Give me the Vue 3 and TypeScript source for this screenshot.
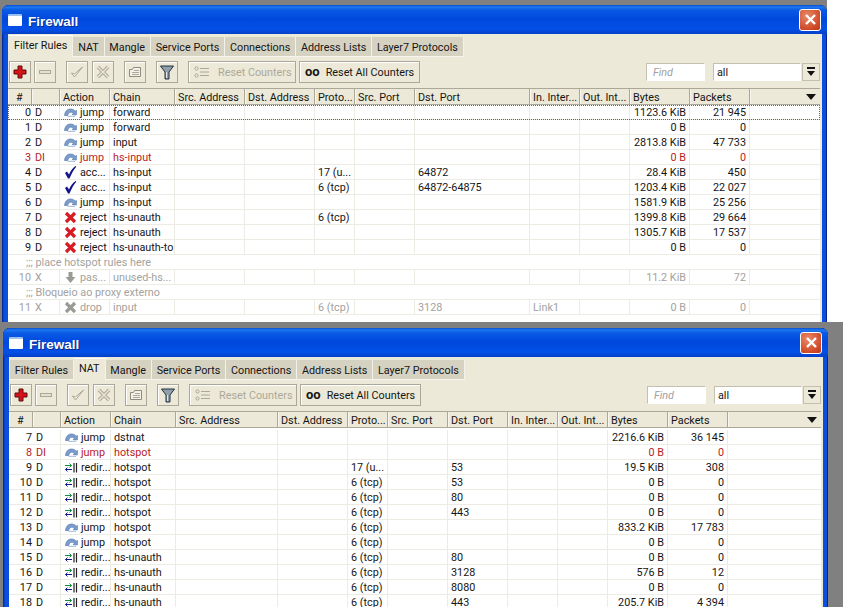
<script setup lang="ts">
type Row = {
  num?: string; flag?: string; icon?: string; action?: string; chain?: string;
  proto?: string; dport?: string; iface?: string; bytes?: string; packets?: string;
  comment?: string; state?: string;
}
const row = (num: string, flag: string, icon: string, action: string, chain: string, proto: string, dport: string, bytes: string, packets: string, state = '', iface = ''): Row =>
  ({ num, flag, icon, action, chain, proto, dport, bytes, packets, state, iface })

const tabs = ['Filter Rules', 'NAT', 'Mangle', 'Service Ports', 'Connections', 'Address Lists', 'Layer7 Protocols']
const headers = ['#', '', 'Action', 'Chain', 'Src. Address', 'Dst. Address', 'Proto...', 'Src. Port', 'Dst. Port', 'In. Inter...', 'Out. Int...', 'Bytes', 'Packets', '']

const windows = [
  {
    key: 'filter', active: 'Filter Rules',
    cols: '24px 28px 50px 65px 70px 70px 40px 60px 115px 50px 50px 60px 60px 70px',
    rows: [
      row('0', 'D', 'jump', 'jump', 'forward', '', '', '1123.6 KiB', '21 945', 'focus'),
      row('1', 'D', 'jump', 'jump', 'forward', '', '', '0 B', '0'),
      row('2', 'D', 'jump', 'jump', 'input', '', '', '2813.8 KiB', '47 733'),
      row('3', 'DI', 'jump', 'jump', 'hs-input', '', '', '0 B', '0', 'red'),
      row('4', 'D', 'accept', 'acc...', 'hs-input', '17 (u...', '64872', '28.4 KiB', '450'),
      row('5', 'D', 'accept', 'acc...', 'hs-input', '6 (tcp)', '64872-64875', '1203.4 KiB', '22 027'),
      row('6', 'D', 'jump', 'jump', 'hs-input', '', '', '1581.9 KiB', '25 256'),
      row('7', 'D', 'reject', 'reject', 'hs-unauth', '6 (tcp)', '', '1399.8 KiB', '29 664'),
      row('8', 'D', 'reject', 'reject', 'hs-unauth', '', '', '1305.7 KiB', '17 537'),
      row('9', 'D', 'reject', 'reject', 'hs-unauth-to', '', '', '0 B', '0'),
      { comment: ';;; place hotspot rules here' },
      row('10', 'X', 'pass', 'pas...', 'unused-hs...', '', '', '11.2 KiB', '72', 'off'),
      { comment: ';;; Bloqueio ao proxy externo' },
      row('11', 'X', 'drop', 'drop', 'input', '6 (tcp)', '3128', '0 B', '0', 'off', 'Link1'),
    ] as Row[],
  },
  {
    key: 'nat', active: 'NAT',
    cols: '24px 28px 50px 65px 102px 70px 40px 60px 60px 50px 50px 60px 60px 93px',
    rows: [
      row('7', 'D', 'jump', 'jump', 'dstnat', '', '', '2216.6 KiB', '36 145'),
      row('8', 'DI', 'jump', 'jump', 'hotspot', '', '', '0 B', '0', 'red'),
      row('9', 'D', 'redir', 'redir...', 'hotspot', '17 (u...', '53', '19.5 KiB', '308'),
      row('10', 'D', 'redir', 'redir...', 'hotspot', '6 (tcp)', '53', '0 B', '0'),
      row('11', 'D', 'redir', 'redir...', 'hotspot', '6 (tcp)', '80', '0 B', '0'),
      row('12', 'D', 'redir', 'redir...', 'hotspot', '6 (tcp)', '443', '0 B', '0'),
      row('13', 'D', 'jump', 'jump', 'hotspot', '6 (tcp)', '', '833.2 KiB', '17 783'),
      row('14', 'D', 'jump', 'jump', 'hotspot', '6 (tcp)', '', '0 B', '0'),
      row('15', 'D', 'redir', 'redir...', 'hs-unauth', '6 (tcp)', '80', '0 B', '0'),
      row('16', 'D', 'redir', 'redir...', 'hs-unauth', '6 (tcp)', '3128', '576 B', '12'),
      row('17', 'D', 'redir', 'redir...', 'hs-unauth', '6 (tcp)', '8080', '0 B', '0'),
      row('18', 'D', 'redir', 'redir...', 'hs-unauth', '6 (tcp)', '443', '205.7 KiB', '4 394'),
    ] as Row[],
  },
]
</script>

<template>
  <div class="stage">
    <section v-for="win in windows" :key="win.key" class="band" :class="'band-' + win.key">
      <div class="window">
        <header class="titlebar">
          <span class="win-icon"></span>
          <span class="win-title">Firewall</span>
          <span class="close">
            <svg width="13" height="13" viewBox="0 0 13 13"><path d="M2 2l9 9M11 2l-9 9" stroke="#fff" stroke-width="2.4" fill="none"/></svg>
          </span>
        </header>
        <div class="client">
          <nav class="tabs">
            <span v-for="t in tabs" :key="t" class="tab" :class="{ active: t === win.active }">{{ t }}</span>
          </nav>
          <div class="toolbar">
            <div class="group g3">
              <button class="btn sq">
                <svg width="16" height="16" viewBox="0 0 16 16"><path d="M6 2h4v4h4v4h-4v4H6v-4H2V6h4z" fill="#d81018" stroke="#5a1010" stroke-width="1"/></svg>
              </button>
              <button class="btn sq">
                <svg width="14" height="14" viewBox="0 0 14 14"><rect x="1.5" y="5.5" width="11" height="3" fill="#e4e1d2" stroke="#aca899"/></svg>
              </button>
            </div>
            <div class="group g4">
              <button class="btn sq">
                <svg width="14" height="14" viewBox="0 0 14 14"><path d="M1.5 8l3 4 8-10-8 7z" fill="#f4f2e8" stroke="#aca899"/></svg>
              </button>
              <button class="btn sq">
                <svg width="14" height="14" viewBox="0 0 14 14"><path d="M2 2l10 10M12 2L2 12" stroke="#aca899" stroke-width="3.4"/><path d="M2 2l10 10M12 2L2 12" stroke="#ece9d8" stroke-width="1.4"/></svg>
              </button>
            </div>
            <button class="btn sq">
              <svg width="14" height="14" viewBox="0 0 14 14"><path d="M1.5 4.500h3l1-2h7v9h-11z" fill="#f4f2e8" stroke="#8f8c7e"/><path d="M6 5.500h5M4 7.500h7M4 9.500h7" stroke="#aca899"/></svg>
            </button>
            <button class="btn sq">
              <svg width="16" height="16" viewBox="0 0 16 16"><path d="M1.500 2h13L10 8v7H6V8z" fill="#8fa0ac" stroke="#22303a"/><path d="M7.500 8v6" stroke="#dfe5e8"/></svg>
            </button>
            <div class="group g3">
              <button class="btn wide dim">
                <svg width="16" height="12" viewBox="0 0 16 12"><circle cx="2.500" cy="2.500" r="1.600" fill="none" stroke="#aca899"/><circle cx="2.500" cy="9.500" r="1.600" fill="none" stroke="#aca899"/><path d="M6 2.500h9M6 6h9M6 9.500h9" stroke="#aca899"/></svg>
                <span class="nowrap">Reset Counters</span>
              </button>
              <button class="btn wider">
                <b class="zeros">oo</b>
                <span class="nowrap">Reset All Counters</span>
              </button>
            </div>
            <div class="search">
              <span class="field find">Find</span>
              <span class="field select">all</span>
              <span class="drop-btn">
                <svg width="10" height="10" viewBox="0 0 10 10"><path d="M1 0h8v2H1zM1 4h8L5 9z" fill="#111"/></svg>
              </span>
            </div>
          </div>
          <div class="table">
            <div class="grid head" :style="{ gridTemplateColumns: win.cols }">
              <span v-for="(h, i) in headers" :key="i" class="hcell" :class="{ hash: i === 0 }">{{ h }}</span>
              <svg class="sort" width="10" height="6" viewBox="0 0 10 6"><path d="M0 0h10L5 6z" fill="#111"/></svg>
            </div>
            <div class="body">
              <template v-for="(r, i) in win.rows" :key="i">
                <div v-if="r.comment" class="comment">{{ r.comment }}</div>
                <div v-else class="grid line" :class="r.state" :style="{ gridTemplateColumns: win.cols }">
                  <span class="cell right tight">{{ r.num }}</span>
                  <span class="cell flag">{{ r.flag }}</span>
                  <span class="cell act">
                    <svg v-if="r.icon === 'jump'" width="13" height="9" viewBox="0 0 13 9"><path d="M0.500 7.500C1 3 3.500 1 6.500 1c2.200 0 3.800.8 4.500 2.200L12.500 2.500 12.300 7 8 6.500l1.500-1C8.600 4.400 7.500 4 6.300 4.300 4.800 4.700 4 6 3.800 7.500z" fill="#7c9ccc" stroke="#4a72a8" stroke-width=".6"/><path d="M3.500 8.300h7.500" stroke="#9cb8dc"/></svg>
                    <svg v-else-if="r.icon === 'accept'" width="13" height="14" viewBox="0 0 13 14"><path d="M1 8l2-1.500 2 3C6.500 6 8.500 3 11.500 1l.8.800C9.500 5 7.500 9 5.500 13.500H4z" fill="#14148c"/></svg>
                    <svg v-else-if="r.icon === 'reject'" width="13" height="13" viewBox="0 0 13 13"><path d="M2 2l9 9M11 2l-9 9" stroke="#d81c24" stroke-width="3.200"/></svg>
                    <svg v-else-if="r.icon === 'pass'" width="13" height="13" viewBox="0 0 13 13"><path d="M4.500 1h4v5h3l-5 6-5-6h3z" fill="#9a9a96"/></svg>
                    <svg v-else-if="r.icon === 'drop'" width="13" height="13" viewBox="0 0 13 13"><path d="M2 2l9 9M11 2l-9 9" stroke="#9a9a96" stroke-width="3.200"/></svg>
                    <svg v-else width="13" height="11" viewBox="0 0 13 11"><path d="M0 3.500h6.500M4.500 1.500l2 2-2 2" stroke="#109040" fill="none"/><path d="M7 7.500H.5M2.500 5.500l-2 2 2 2" stroke="#101890" fill="none"/><path d="M9 1v9.500M11.500 1v9.500" stroke="#222" stroke-width="1.200"/></svg>
                    <span class="act-text">{{ r.action }}</span>
                  </span>
                  <span class="cell">{{ r.chain }}</span>
                  <span class="cell"></span>
                  <span class="cell"></span>
                  <span class="cell">{{ r.proto }}</span>
                  <span class="cell"></span>
                  <span class="cell">{{ r.dport }}</span>
                  <span class="cell">{{ r.iface }}</span>
                  <span class="cell"></span>
                  <span class="cell right">{{ r.bytes }}</span>
                  <span class="cell right">{{ r.packets }}</span>
                  <span class="cell last"></span>
                </div>
              </template>
            </div>
          </div>
        </div>
      </div>
      <div class="side"></div>
    </section>
  </div>
</template>

<style>
html, body { background: #fff; }
</style>

<style scoped>
.stage {
  width: 843px;
  height: 607px;
  overflow: hidden;
  background: #808080;
  font-family: Roboto, "Liberation Sans", Arial, sans-serif;
  font-size: 10.8px;
  color: #151515;
}
.band { display: flex; overflow: hidden; }
.band-filter { height: 322px; padding-left: 2px; padding-top: 5px; box-sizing: border-box; width: 843px; }
.band-nat { height: 279px; margin-top: 6px; padding-left: 3px; }
.band-nat .body { padding-top: 2px; }
.side { flex: 1; }
.band-filter .side { background: #fff; margin-top: -5px; }
.window {
  width: 825px;
  flex: none;
  height: 400px;
  border-radius: 7px 7px 0 0;
  background: #0a50dc;
  box-shadow: inset 1px 0 #0a2a9a, inset -1px 0 #062090, inset 2px 0 #0840d0;
}
.titlebar {
  height: 29px;
  display: flex;
  align-items: center;
  padding: 0 6px;
  border-radius: 7px 7px 0 0;
  background: linear-gradient(#0a4ccc 0, #1e78f0 2px, #0a5ae6 5px, #0048dc 14px, #0450e8 24px, #0440c8 29px);
}
.win-icon {
  width: 14px;
  height: 10px;
  background: #fff;
  border-top: 2px solid #9cc0f0;
  border-radius: 1px;
  margin-top: 1px;
}
.win-title {
  margin-left: 6px;
  padding-top: 3px;
  color: #fff;
  font-family: "Liberation Sans", Arial, sans-serif;
  font-size: 13.5px;
  font-weight: 700;
  text-shadow: 1px 1px #0a2a8a;
}
.close {
  margin-left: auto;
  width: 20px;
  height: 20px;
  display: flex;
  align-items: center;
  justify-content: center;
  border: 1px solid #fff;
  border-radius: 3px;
  background: radial-gradient(circle at 35% 30%, #e88a68, #d04a28 70%, #b83818);
}
.client {
  margin: 0 5px 0 6px;
  background: #ece9d8;
  height: 370px;
}
.tabs {
  display: flex;
  align-items: flex-end;
  height: 24px;
  padding-left: 1px;
  box-sizing: border-box;
}
.tab {
  height: 19px;
  line-height: 21px;
  margin-bottom: 1px;
  padding: 0 4.8px;
  background: #d6d2c2;
  border-right: 1px solid #f4f2e8;
  border-bottom: 1px solid #f6f4ec;
  white-space: nowrap;
}
.tab.active {
  height: 22px;
  line-height: 20px;
  margin-bottom: 0;
  padding: 0 5px;
  background: #ece9d8;
  border-bottom: 0;
  border-top: 1px solid #fff;
}
.toolbar {
  display: flex;
  align-items: center;
  gap: 10px;
  height: 30px;
  padding: 0 2px 2px 1px;
  box-sizing: border-box;
}
.group { display: flex; align-items: center; }
.g3 { gap: 3px; }
.g4 { gap: 4px; }
.btn {
  height: 22px;
  display: inline-flex;
  align-items: center;
  padding: 0;
  border: 1px solid #aca899;
  background: #ece9d8;
  box-shadow: inset 1px 1px #fff;
  font: inherit;
  color: inherit;
  box-sizing: border-box;
}
.sq { width: 22px; justify-content: center; }
.wide { width: 108px; padding-left: 5px; gap: 8px; }
.wider { width: 121px; padding-left: 5px; gap: 6px; }
.nowrap { white-space: nowrap; }
.dim { color: #aca899; }
.zeros { font-size: 13px; line-height: 14px; }
.search { margin-left: auto; display: flex; align-items: center; }
.field {
  height: 18px;
  line-height: 18px;
  background: #fff;
  border: 1px solid #c4c0b0;
  border-right-color: #fff;
  border-bottom-color: #fff;
  box-sizing: border-box;
  padding-left: 3px;
}
.find { width: 59px; margin-right: 8px; color: #a0a0a0; font-style: italic; padding-left: 6px; }
.select { width: 88px; margin-right: 1px; }
.drop-btn {
  width: 18px;
  height: 18px;
  display: flex;
  align-items: center;
  justify-content: center;
  border: 1px solid #c4c0b0;
  box-sizing: border-box;
}
.table { margin-right: 2px; background: #fff; height: 260px; }
.grid { display: grid; }
.head {
  position: relative;
  height: 17px;
  background: #ece9d8;
  border-top: 1px solid #aca899;
  border-bottom: 1px solid #aca899;
  box-sizing: border-box;
}
.hcell {
  border-right: 1px solid #aca899;
  box-shadow: inset 1px 0 #f8f6ee;
  padding-left: 3px;
  line-height: 17px;
  white-space: nowrap;
  overflow: hidden;
}
.hcell:nth-last-of-type(1) { border-right: 0; }
.hash { padding-left: 8px; }
.sort { position: absolute; right: 4px; top: 5px; }
.line { height: 15px; box-sizing: border-box; border-bottom: 1px solid #ecebe4; }
.line.red { color: #b81c24; }
.line.off { color: #a2a29e; }
.line.focus { outline: 1px dotted #666; outline-offset: -1px; }
.cell {
  border-right: 1px solid #ecebe4;
  padding: 0 3px;
  line-height: 15px;
  white-space: nowrap;
  overflow: hidden;
}
.cell.last { border-right: 0; }
.right { text-align: right; }
.tight { padding-right: 1px; border-right: 0; }
.flag { padding-left: 3px; }
.act { display: flex; align-items: center; gap: 3px; padding-left: 4px; }
.act svg { flex: none; }
.comment { height: 15px; box-sizing: border-box; line-height: 15px; padding-left: 18px; color: #a2a29e; border-bottom: 1px solid #ecebe4; }
</style>
